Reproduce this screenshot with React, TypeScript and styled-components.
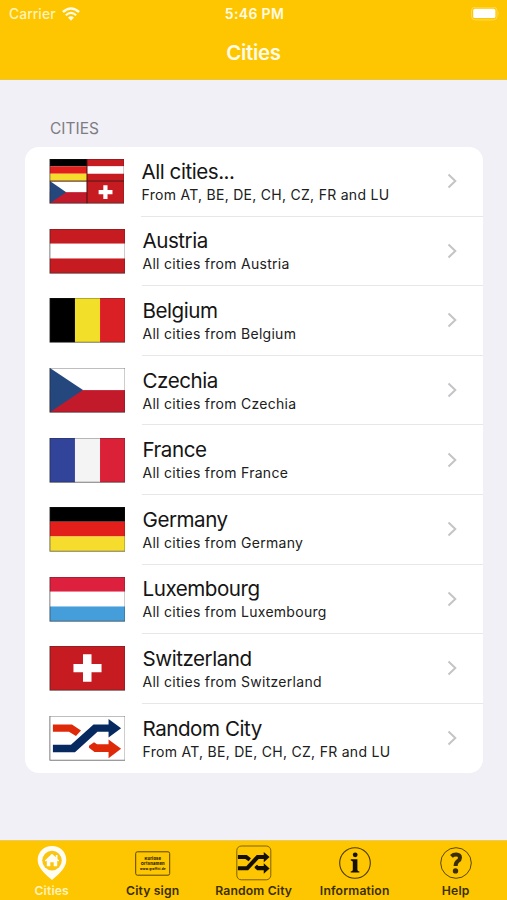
import React from "react";
import styled, { createGlobalStyle } from "styled-components";

const GlobalStyle = createGlobalStyle`
  * { box-sizing: border-box; }
  body { margin: 0; background: #f1f0f6; font-family: Inter, "Liberation Sans", sans-serif; }
`;

const Screen = styled.div`
  width: 507px;
  height: 900px;
  display: flex;
  flex-direction: column;
  background: #f1f0f6;
  overflow: hidden;
`;

const Header = styled.header`
  height: 80px;
  background: #fec601;
  border-bottom: 1px solid #e9c545;
  color: #fffbe4;
`;

const StatusBar = styled.div`
  height: 28px;
  padding: 0 7px 0 9px;
  display: grid;
  grid-template-columns: 1fr auto 1fr;
  align-items: center;
  font-size: 14px;
  line-height: 28px;
`;

const Carrier = styled.div`
  display: flex;
  align-items: center;
  gap: 6px;
  letter-spacing: 0.1px;
  font-weight: 500;
  font-size: 13.8px;
  color: #fff3bb;
`;

const Clock = styled.div`
  font-size: 14px;
  font-weight: 600;
  letter-spacing: 0.35px;
`;

const BatterySlot = styled.div`
  display: flex;
  justify-content: flex-end;
`;

const Title = styled.h1`
  margin: 0;
  padding-top: 11.5px;
  text-align: center;
  font-size: 20.5px;
  line-height: 26px;
  font-weight: 600;
  letter-spacing: -0.3px;
`;

const Content = styled.main`
  flex: 1;
  padding: 39px 24px 0 25px;
`;

const SectionLabel = styled.h2`
  margin: 0 0 8px 25px;
  font-size: 15.5px;
  line-height: 20px;
  font-weight: 400;
  color: #7d7c82;
`;

const Card = styled.ul`
  margin: 0;
  padding: 0;
  list-style: none;
  background: #fff;
  border-radius: 14px;
`;

const Row = styled.li`
  display: flex;
  align-items: stretch;
  height: 69.6px;
  padding-left: 24px;
`;

const FlagBox = styled.div<{ $narrow?: boolean }>`
  width: ${(p) => (p.$narrow ? 92 : 93)}px;
  display: flex;
  align-items: center;
  svg { display: block; }
`;

const RowBody = styled.div<{ $last?: boolean }>`
  flex: 1;
  display: flex;
  align-items: center;
  justify-content: space-between;
  padding-right: 26px;
  border-bottom: 1px solid ${(p) => (p.$last ? "transparent" : "#e7e7e9")};
`;

const Labels = styled.div`
  padding-left: 0.5px;
  padding-top: 1px;
  white-space: nowrap;
`;

const Name = styled.div`
  font-size: 20.6px;
  line-height: 25px;
  letter-spacing: -0.47px;
  color: #151515;
`;

const Detail = styled.div`
  font-size: 14px;
  line-height: 20px;
  margin-top: 1px;
  letter-spacing: 0.28px;
  color: #202020;
`;

const TabBar = styled.nav`
  height: 60px;
  display: grid;
  grid-template-columns: repeat(5, 101px);
  justify-content: start;
  background: #fec601;
  border-top: 1px solid #eccb5b;
`;

const Tab = styled.div<{ $active?: boolean }>`
  display: flex;
  flex-direction: column;
  align-items: center;
  padding-top: 4px;
  padding-left: 2.4px;
  font-size: 12.2px;
  line-height: 16px;
  font-weight: 600;
  letter-spacing: 0.15px;
  white-space: nowrap;
  color: ${(p) => (p.$active ? "#fff3bd" : "#3b2e00")};
  svg { display: block; margin-bottom: 2px; }
`;

type Kind = "all" | "at" | "be" | "cz" | "fr" | "de" | "lu" | "ch" | "random";

const Tri = ({ colors, vertical }: { colors: string[]; vertical?: boolean }) => (
  <>
    {colors.map((c, i) =>
      vertical ? (
        <rect key={i} x={i * 25} width="25" height="44.4" fill={c} />
      ) : (
        <rect key={i} y={i * 14.8} width="75" height="14.8" fill={c} />
      )
    )}
  </>
);

const Czech = () => (
  <>
    <rect width="75" height="22.2" fill="#fff" />
    <rect y="22.2" width="75" height="22.2" fill="#c31a2b" />
    <path d="M0 0L33 22.2L0 44.4Z" fill="#24477d" />
  </>
);

const Swiss = () => (
  <>
    <rect width="75" height="44.4" fill="#c61b20" />
    <path d="M33 8.4H41.5V18H51.5V26.4H41.5V36H33V26.4H23.5V18H33Z" fill="#fff" />
  </>
);

const Shuffle = ({ first, second }: { first: string; second: string }) => (
  <>
    <path d="M3 8.5H22L31 14.5L26 20L19 15.8H3Z" fill={first} />
    <path d="M39 30L44 26.3L47 28.4H58.5V23.5L71 33L58.5 42.5V36.2H44.5L39 32Z" fill={first} />
    <path d="M3 29H21L43.5 8.5H58.5V3L71 12.3L58.5 21.5V15.8H47.5L25 36.3H3Z" fill={second} />
  </>
);

const artwork = (kind: Kind): React.ReactNode => {
  switch (kind) {
    case "at": return <Tri colors={["#c61b20", "#fff", "#c61b20"]} />;
    case "be": return <Tri vertical colors={["#000", "#f2df2a", "#da2024"]} />;
    case "fr": return <Tri vertical colors={["#32439a", "#f4f4f5", "#da2137"]} />;
    case "de": return <Tri colors={["#000", "#e31f1b", "#f5dc2d"]} />;
    case "lu": return <Tri colors={["#dd203d", "#fff", "#459dda"]} />;
    case "cz": return <Czech />;
    case "ch": return <Swiss />;
    case "random":
      return <><rect width="75" height="44.4" fill="#fff" /><Shuffle first="#df2a0a" second="#062a60" /></>;
    case "all":
      return (
        <>
          <g transform="scale(.5)"><Tri colors={["#000", "#e31f1b", "#f5dc2d"]} /></g>
          <g transform="translate(37.5 0) scale(.5)"><Tri colors={["#c61b20", "#fff", "#c61b20"]} /></g>
          <g transform="translate(0 22.2) scale(.5)"><Czech /></g>
          <g transform="translate(37.5 22.2) scale(.5)"><Swiss /></g>
          <path d="M37.5 0V44.4M0 22.2H75" stroke="#4b1010" strokeWidth="1" />
        </>
      );
  }
};

const Flag = ({ kind }: { kind: Kind }) => (
  <svg
    width={kind === "all" ? 75 : 76}
    height="45"
    viewBox="-.9 0 75.8 45.2"
    preserveAspectRatio="none"
  >
    {artwork(kind)}
    <rect width="75" height="44.4" fill="none" stroke="#262626" strokeOpacity=".75" strokeWidth=".8" />
  </svg>
);

const Chevron = () => (
  <svg width="10" height="16" viewBox="0 0 10 16" fill="none">
    <path d="M1.5 1.6L8.3 8L1.5 14.4" stroke="#c4c4c6" strokeWidth="2" />
  </svg>
);

const Wifi = () => (
  <svg width="18" height="14" viewBox="0 0 18 14" fill="none">
    <path d="M.9 5Q9-2.2 17.1 5" stroke="#fffbe4" strokeWidth="2.4" />
    <path d="M3.8 8.2Q9 3.6 14.2 8.2" stroke="#fffbe4" strokeWidth="2.2" />
    <path d="M6 10.6Q9 8 12 10.6L9 13.7Z" fill="#fffbe4" />
  </svg>
);

const Battery = () => (
  <svg width="29" height="14" viewBox="0 0 29 14">
    <rect x=".6" y=".1" width="25.4" height="12.8" rx="3.5" fill="none" stroke="#ffda5c" />
    <rect x="2.2" y="1.8" width="22.2" height="9.2" rx="1.6" fill="#fff" />
    <path d="M27.3 4.3Q29 6.5 27.3 8.7Z" fill="#ffda5c" />
  </svg>
);

const PinIcon = () => (
  <svg width="36" height="36" viewBox="0 0 36 36">
    <path d="M18 1C9.8 1 3.7 7.1 3.7 14.9C3.7 23.6 12.3 29.7 18 35C23.7 29.7 32.3 23.6 32.3 14.9C32.3 7.1 26.2 1 18 1Z" fill="#fffdf3" />
    <circle cx="18" cy="15.6" r="9.8" fill="#f9c510" />
    <path d="M10.8 15.6L18 8.7L21.8 12.3V10.1H23.5V14L25.2 15.6L24.2 16.6L23.2 15.7V21.2H19.7V17.3H16.3V21.2H12.8V15.7L11.8 16.6Z" fill="#fffdf3" />
  </svg>
);

const SignIcon = () => (
  <svg width="36" height="36" viewBox="0 0 36 36">
    <rect x=".7" y="6.8" width="34" height="23.4" rx="1.7" fill="none" stroke="#594500" />
    <g fill="#2b2100" textAnchor="middle" fontFamily="Inter, sans-serif" fontWeight="800">
      <text x="17.8" y="14.7" fontSize="4.1">Kuriose</text>
      <text x="17.8" y="20.1" fontSize="4.1">Ortsnamen</text>
      <text x="17.8" y="25" fontSize="3">www.graffiti.de</text>
    </g>
  </svg>
);

const ShuffleIcon = () => (
  <svg width="36" height="36" viewBox="0 0 36 36">
    <rect x=".8" y="1" width="34" height="33.8" rx="4.5" fill="none" stroke="#6d5500" strokeWidth=".9" />
    <g transform="translate(.5 5.3) scale(.466 .55)"><Shuffle first="#151000" second="#151000" /></g>
  </svg>
);

const InfoIcon = () => (
  <svg width="36" height="36" viewBox="0 0 36 36">
    <circle cx="18" cy="18" r="15.3" fill="none" stroke="#493900" strokeWidth="1.1" />
    <circle cx="18.2" cy="9.8" r="2.4" fill="#171100" />
    <path d="M13.8 14.3H20.4V24.7Q20.4 26.2 22.4 26.4V27.6H13.7V26.4Q15.8 26.2 15.8 24.7V17Q15.8 15.5 13.8 15.4Z" fill="#171100" />
  </svg>
);

const HelpIcon = () => (
  <svg width="36" height="36" viewBox="0 0 36 36">
    <circle cx="18" cy="18" r="15.3" fill="none" stroke="#594500" strokeWidth="1" />
    <path d="M13.4 11.4Q15.5 9.4 18.3 9.5Q22 9.6 22 12.7Q22 14.7 19.8 16.1Q17.8 17.5 17.6 21" fill="none" stroke="#3b2e00" strokeWidth="4" />
    <circle cx="17.5" cy="25.9" r="2.7" fill="#3b2e00" />
  </svg>
);

const cities: { kind: Kind; name: string; detail: string }[] = [
  { kind: "all", name: "All cities...", detail: "From AT, BE, DE, CH, CZ, FR and LU" },
  { kind: "at", name: "Austria", detail: "All cities from Austria" },
  { kind: "be", name: "Belgium", detail: "All cities from Belgium" },
  { kind: "cz", name: "Czechia", detail: "All cities from Czechia" },
  { kind: "fr", name: "France", detail: "All cities from France" },
  { kind: "de", name: "Germany", detail: "All cities from Germany" },
  { kind: "lu", name: "Luxembourg", detail: "All cities from Luxembourg" },
  { kind: "ch", name: "Switzerland", detail: "All cities from Switzerland" },
  { kind: "random", name: "Random City", detail: "From AT, BE, DE, CH, CZ, FR and LU" },
];

const tabs = [
  { label: "Cities", icon: <PinIcon />, active: true },
  { label: "City sign", icon: <SignIcon /> },
  { label: "Random City", icon: <ShuffleIcon /> },
  { label: "Information", icon: <InfoIcon /> },
  { label: "Help", icon: <HelpIcon /> },
];

export default function App() {
  return (
    <>
      <GlobalStyle />
      <Screen>
        <Header>
          <StatusBar>
            <Carrier>Carrier <Wifi /></Carrier>
            <Clock>5:46 PM</Clock>
            <BatterySlot><Battery /></BatterySlot>
          </StatusBar>
          <Title>Cities</Title>
        </Header>
        <Content>
          <SectionLabel>CITIES</SectionLabel>
          <Card>
            {cities.map((c, i) => (
              <Row key={c.kind}>
                <FlagBox $narrow={c.kind === "all"}><Flag kind={c.kind} /></FlagBox>
                <RowBody $last={i === cities.length - 1}>
                  <Labels>
                    <Name>{c.name}</Name>
                    <Detail>{c.detail}</Detail>
                  </Labels>
                  <Chevron />
                </RowBody>
              </Row>
            ))}
          </Card>
        </Content>
        <TabBar>
          {tabs.map((t) => (
            <Tab key={t.label} $active={t.active}>{t.icon}{t.label}</Tab>
          ))}
        </TabBar>
      </Screen>
    </>
  );
}
